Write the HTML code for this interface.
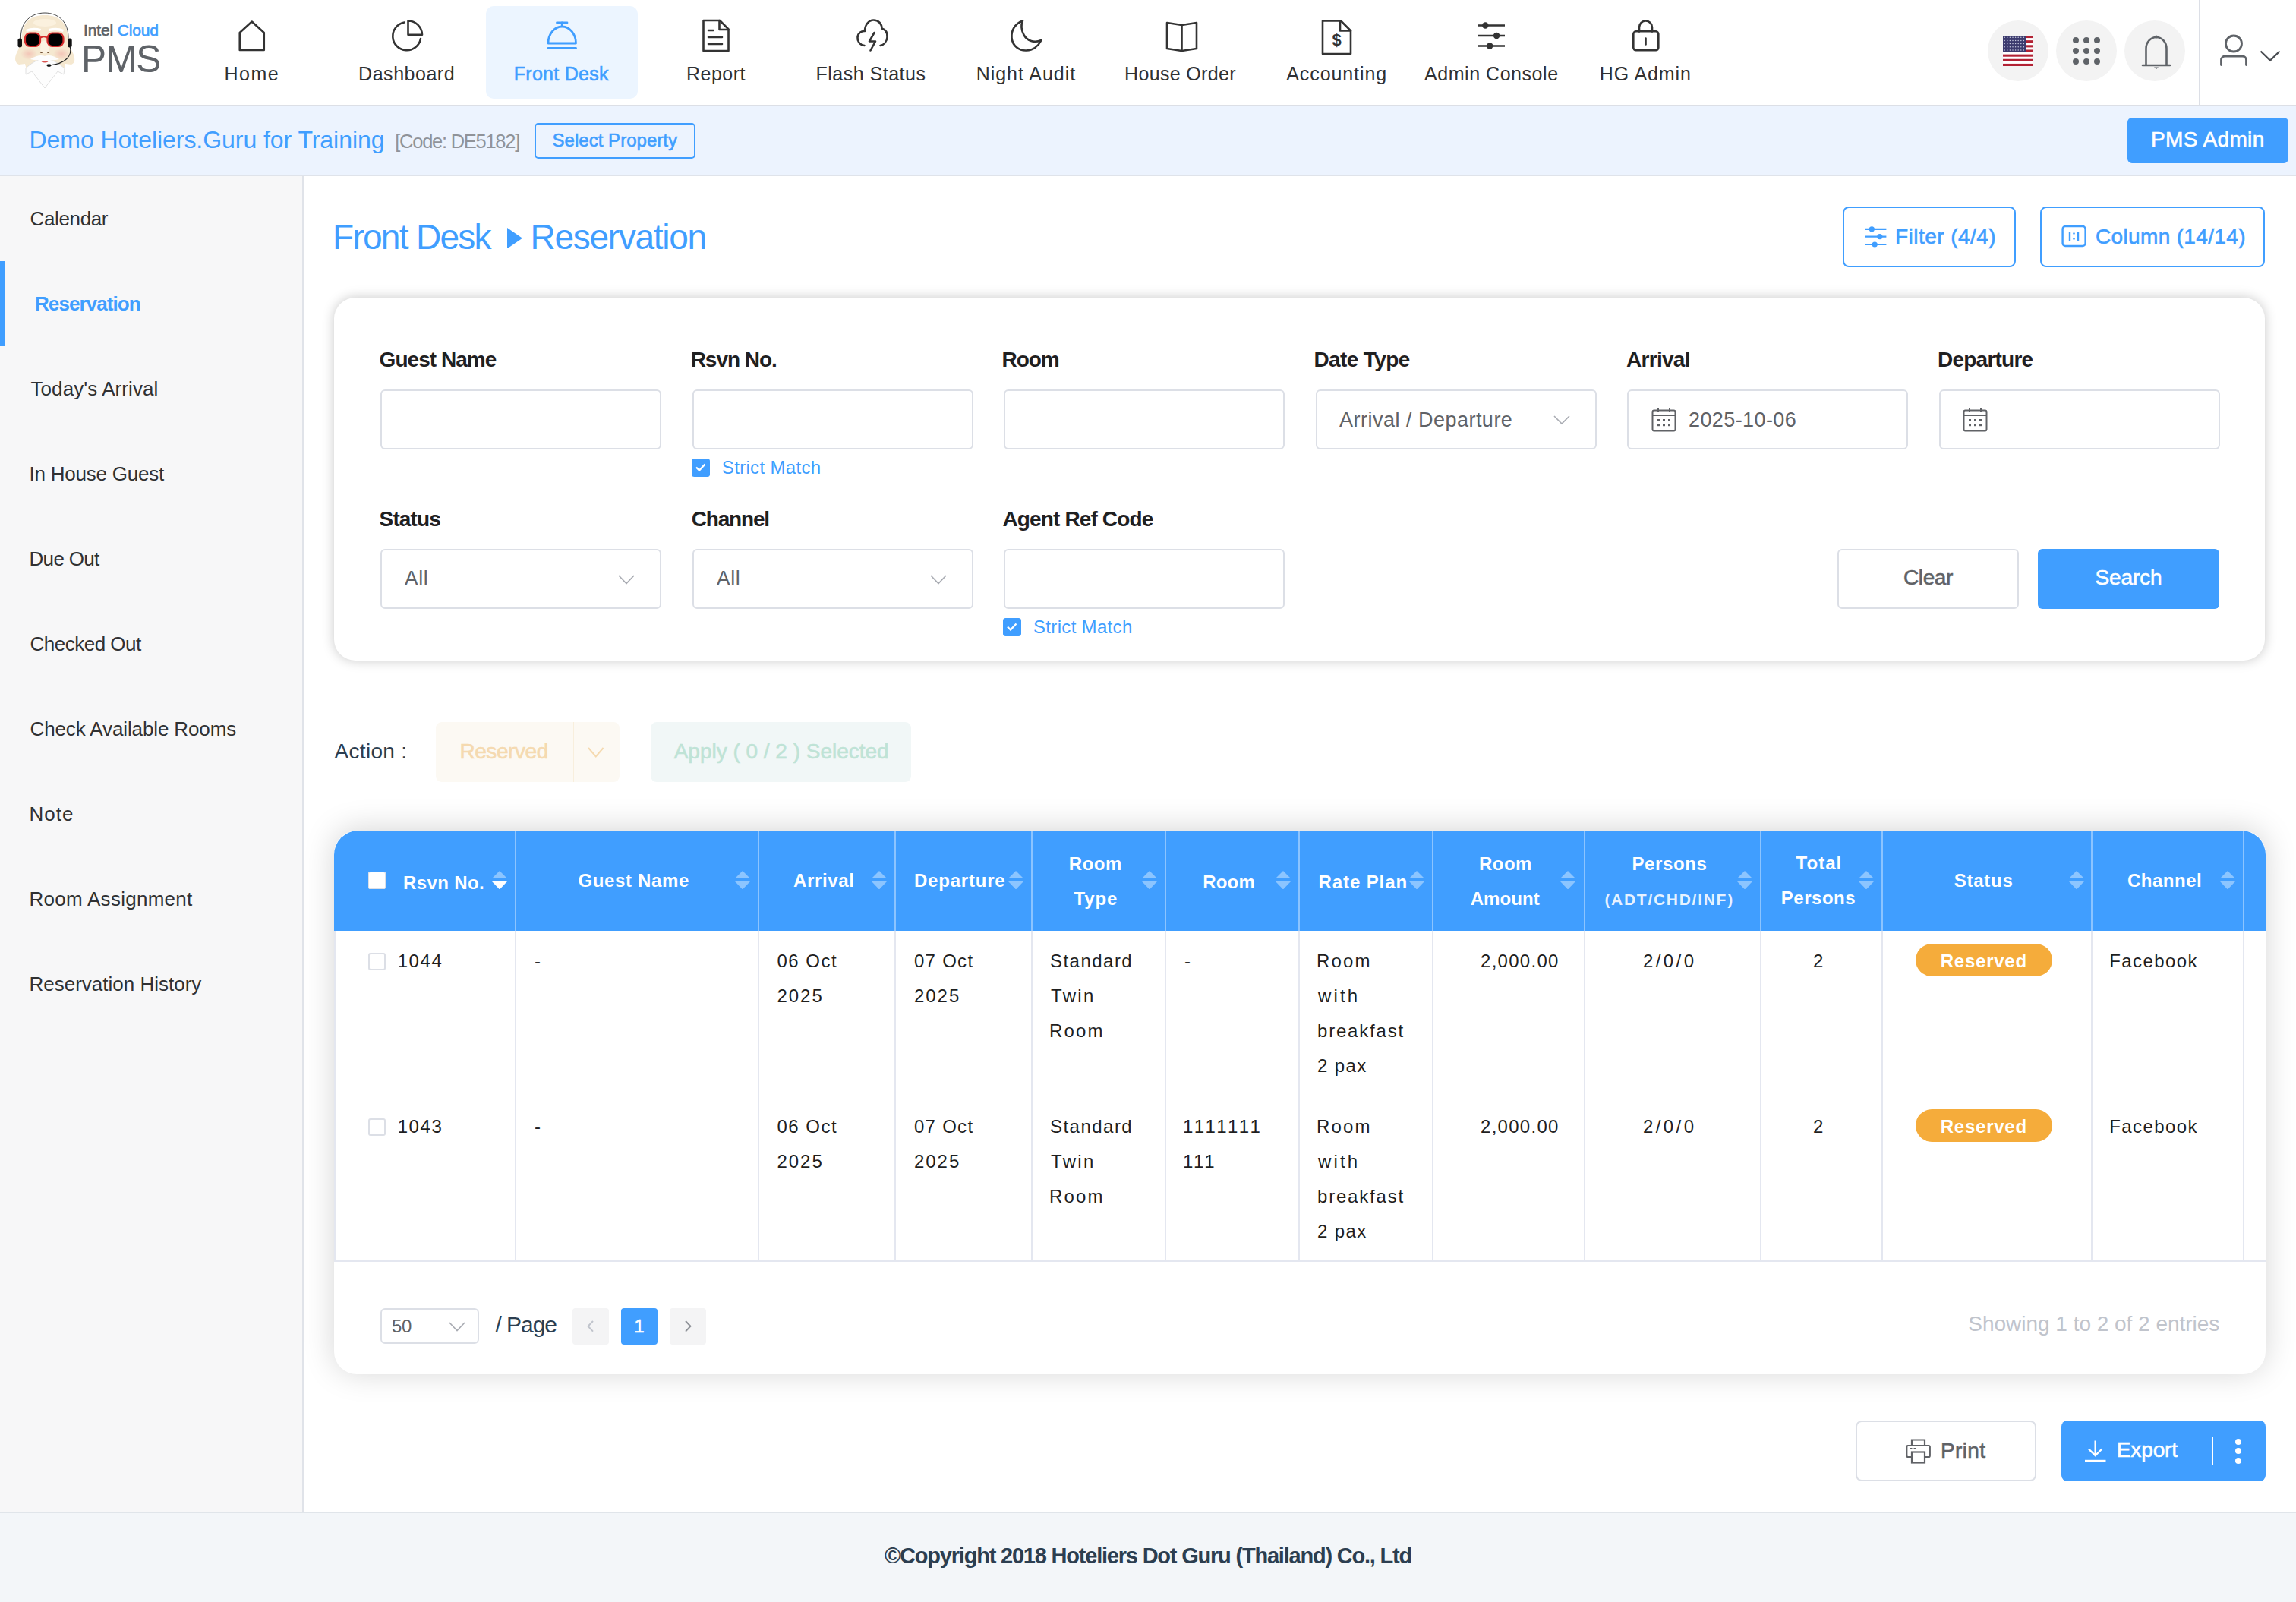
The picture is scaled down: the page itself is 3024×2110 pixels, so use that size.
<!DOCTYPE html>
<html><head><meta charset="utf-8"><title>Reservation</title><style>
*{margin:0;padding:0;box-sizing:border-box;}
html,body{width:3024px;height:2110px;overflow:hidden;background:#fff;}
body{position:relative;font-family:"Liberation Sans",sans-serif;color:#303133;}
.t{position:absolute;white-space:nowrap;}
.r{position:absolute;}
</style></head><body>
<div class="r" style="left:0px;top:0px;width:3024px;height:138px;background:#fff;"></div>
<div class="r" style="left:0px;top:138px;width:3024px;height:2px;background:#dcdfe6;"></div>
<svg class="r" style="left:0px;top:0px;" width="110" height="125" viewBox="0 0 110 125">
<defs><radialGradient id="ck"><stop offset="0" stop-color="#f3c6b8"/><stop offset="1" stop-color="#f3c6b8" stop-opacity="0"/></radialGradient></defs>
<path d="M59 20 C40 20 30 30 29 46 C28 56 25 64 21 72 C19 78 20 83 25 85 L33 84 L35 92 L43 91 L59 116 L75 91 L85 92 L86 84 L94 85 C99 83 99 78 97 72 C93 64 90 56 89 46 C88 30 78 20 59 20Z" fill="#f5e8d0"/>
<ellipse cx="59" cy="30" rx="15" ry="5" fill="#fbf1de"/>
<ellipse cx="38" cy="71" rx="11" ry="8" fill="url(#ck)"/>
<ellipse cx="81" cy="71" rx="11" ry="8" fill="url(#ck)"/>
<path d="M34 90 C40 84 46 80 59 76 C72 80 78 84 85 90 L84 98 L76 94 L59 116 L42 94 L34 98Z" fill="#fdfdfd" stroke="#dcdcdc" stroke-width="0.9"/>
<path d="M40 78 C48 73 54 72 59 74 C64 72 70 73 78 78 C72 80 64 79 59 79 C54 79 46 80 40 78Z" fill="#fdfdfd"/>
<path d="M54.5 81.5 Q59 78.5 63.5 81.5 Q59 83.5 54.5 81.5Z" fill="#d9534f"/>
<path d="M54 55 Q59 52 64 55 L65 66 Q62 71 59 70 Q56 71 53 66Z" fill="#fbf2e2"/><ellipse cx="54.5" cy="69" rx="1.6" ry="0.9" fill="#6b4a2e"/><ellipse cx="63.5" cy="69" rx="1.6" ry="0.9" fill="#6b4a2e"/>
<path d="M34 39 Q43 35 54 38 L53 41 Q43 39 35 42Z M64 38 Q75 35 84 39 L83 42 Q75 39 65 41Z" fill="#fff"/>
<rect x="33" y="43.5" width="20" height="17.5" rx="6.5" fill="#000" stroke="#d42a2a" stroke-width="2.2"/>
<rect x="62.5" y="43.5" width="21" height="17.5" rx="6.5" fill="#000" stroke="#d42a2a" stroke-width="2.2"/>
<path d="M52.5 50 Q58 46.5 63 50" stroke="#d42a2a" stroke-width="2" fill="none"/>
<path d="M27.5 52 C26 28 42 17 59 17 C76 17 91 28 90 52" stroke="#333" stroke-width="0.9" fill="none"/>
<rect x="23.5" y="50.5" width="5.5" height="12" rx="2.7" fill="#111"/>
<rect x="89.2" y="50.5" width="5.5" height="12" rx="2.7" fill="#111"/>
<path d="M92 60 C96 74 86 84 65 86" stroke="#222" stroke-width="1.1" fill="none"/>
<ellipse cx="64.5" cy="86" rx="3" ry="1.8" fill="#111"/>
</svg>
<div class="t" style="top:29.22px;font-size:21px;line-height:21px;color:#5a5e66;-webkit-text-stroke-width:0.6px;letter-spacing:-0.150px;left:110px;">Intel <span style="color:#409eff">Cloud</span></div>
<div class="t" style="top:53.40px;font-size:49.5px;line-height:49.5px;color:#5f6368;letter-spacing:-1.000px;left:107px;">PMS</div>
<div class="r" style="left:640px;top:8px;width:200px;height:122px;background:#ecf5ff;border-radius:10px;"></div>
<svg class="r" style="left:309.25px;top:24px;" width="46" height="50" viewBox="0 0 46 50"><path d="M6.75 19 L22.75 4.5 L38.75 19 V42 H6.75 Z" stroke="#333" stroke-width="2.6" fill="none" stroke-linecap="round" stroke-linejoin="round" stroke-linecap="butt" stroke-linejoin="miter"/></svg>
<div class="t" style="top:84.84px;font-size:25px;line-height:25px;color:#303133;letter-spacing:1.467px;left:295.5px;">Home</div>
<svg class="r" style="left:513.0px;top:24px;" width="46" height="50" viewBox="0 0 46 50"><path d="M19.5 5.5 A18.5 18.5 0 1 0 41 27" stroke="#333" stroke-width="2.6" fill="none" stroke-linecap="round" stroke-linejoin="round"/><path d="M24.5 3.5 V21.8 H43 A18.5 18.5 0 0 0 24.5 3.5 Z" stroke="#333" stroke-width="2.6" fill="none" stroke-linecap="round" stroke-linejoin="round" stroke-linejoin="miter"/></svg>
<div class="t" style="top:84.84px;font-size:25px;line-height:25px;color:#303133;letter-spacing:0.525px;left:472.1px;">Dashboard</div>
<svg class="r" style="left:717.75px;top:24px;" width="46" height="50" viewBox="0 0 46 50"><g stroke="#409eff" stroke-width="2.8" fill="none" stroke-linecap="round"><path d="M15.5 6 H29"/><path d="M22.25 6 V10"/><path d="M4 33 A18.25 22 0 0 1 40.5 33 Z" stroke-linejoin="round"/><path d="M4 39.5 H40.5"/></g></svg>
<div class="t" style="top:84.84px;font-size:25px;line-height:25px;color:#409eff;-webkit-text-stroke-width:0.6px;letter-spacing:0.267px;left:676.8px;">Front Desk</div>
<svg class="r" style="left:922px;top:24px;" width="46" height="50" viewBox="0 0 46 50"><path d="M4.5 3 H26 L37.5 14.5 V43 H4.5 Z" stroke="#333" stroke-width="2.6" fill="none" stroke-linecap="round" stroke-linejoin="round" stroke-linejoin="miter" stroke-linecap="butt"/><path d="M25.5 3 V15 H37.5" stroke="#333" stroke-width="2.6" fill="none" stroke-linecap="round" stroke-linejoin="round" stroke-linejoin="miter"/><path d="M11 16 H17.5 M11 25 H29 M11 34 H29" stroke="#333" stroke-width="2.6" fill="none" stroke-linecap="round" stroke-linejoin="round" stroke-linecap="butt"/></svg>
<div class="t" style="top:84.84px;font-size:25px;line-height:25px;color:#303133;letter-spacing:0.520px;left:903.9px;">Report</div>
<svg class="r" style="left:1125.5px;top:23px;" width="46" height="50" viewBox="0 0 46 50"><path d="M12.5 37 C6 36 3 31 3.5 26 C4 20.5 8.5 17.5 13 18 C13 10 18 3.5 24.5 3.5 C31 3.5 35.5 8.5 35.5 14.5 C40.5 16 43 20 42.5 26 C42 32 38 36 33.5 37" stroke="#333" stroke-width="2.6" fill="none" stroke-linecap="round" stroke-linejoin="round"/><path d="M25.5 20 L19 31.5 H27 L20.5 43.5" stroke="#333" stroke-width="2.6" fill="none" stroke-linecap="round" stroke-linejoin="round"/></svg>
<div class="t" style="top:84.84px;font-size:25px;line-height:25px;color:#303133;letter-spacing:0.509px;left:1074.4px;">Flash Status</div>
<svg class="r" style="left:1329px;top:24px;" width="46" height="50" viewBox="0 0 46 50"><path d="M18 3.5 C8 7 2.5 16 3.5 26 C4.5 36 13 43 23 42.5 C31 42 38.5 37 42.5 29 C33 33 24 30 19.5 22 C16 15.5 15.5 9 18 3.5 Z" stroke="#333" stroke-width="2.6" fill="none" stroke-linecap="round" stroke-linejoin="round"/></svg>
<div class="t" style="top:84.84px;font-size:25px;line-height:25px;color:#303133;letter-spacing:0.950px;left:1285.7px;">Night Audit</div>
<svg class="r" style="left:1533.5px;top:26px;" width="46" height="50" viewBox="0 0 46 50"><path d="M3 4 L22.5 7 L42 4 V38 L22.5 41 L3 38 Z" stroke="#333" stroke-width="2.6" fill="none" stroke-linecap="round" stroke-linejoin="round"/><path d="M22.5 7 V41" stroke="#333" stroke-width="2.6" fill="none" stroke-linecap="round" stroke-linejoin="round"/></svg>
<div class="t" style="top:84.84px;font-size:25px;line-height:25px;color:#303133;letter-spacing:0.340px;left:1481px;">House Order</div>
<svg class="r" style="left:1737.5px;top:24px;" width="46" height="50" viewBox="0 0 46 50"><path d="M4 3.5 H28 L41 16.5 V47 H4 Z" stroke="#333" stroke-width="2.6" fill="none" stroke-linecap="round" stroke-linejoin="round" stroke-linejoin="miter" stroke-linecap="butt"/><path d="M27 3.5 V16.5 H41" stroke="#333" stroke-width="2.6" fill="none" stroke-linecap="round" stroke-linejoin="round" stroke-linejoin="miter"/><text x="22.5" y="36" font-family="Liberation Sans" font-weight="700" font-size="22" fill="#333" text-anchor="middle">$</text></svg>
<div class="t" style="top:84.84px;font-size:25px;line-height:25px;color:#303133;letter-spacing:0.922px;left:1694.2px;">Accounting</div>
<svg class="r" style="left:1941px;top:24px;" width="46" height="50" viewBox="0 0 46 50"><path d="M5 9.5 H41 M5 23 H41 M5 36.5 H41" stroke="#333" stroke-width="2.6"/><circle cx="15.3" cy="9.5" r="4.2" fill="#333"/><circle cx="30.1" cy="23" r="4.2" fill="#333"/><circle cx="21.2" cy="36.5" r="4.2" fill="#333"/></svg>
<div class="t" style="top:84.84px;font-size:25px;line-height:25px;color:#303133;letter-spacing:0.542px;left:1876px;">Admin Console</div>
<svg class="r" style="left:2147.2px;top:24px;" width="46" height="50" viewBox="0 0 46 50"><path d="M12 17.5 V12 A8.5 8.5 0 0 1 29 12 V17.5" stroke="#333" stroke-width="2.6" fill="none" stroke-linecap="round" stroke-linejoin="round"/><rect x="4.3" y="17.3" width="33" height="25" rx="3.5" stroke="#333" stroke-width="2.6" fill="none" stroke-linecap="round" stroke-linejoin="round"/><path d="M20.5 26.5 V34.5" stroke="#333" stroke-width="2.6" fill="none" stroke-linecap="round" stroke-linejoin="round"/></svg>
<div class="t" style="top:84.84px;font-size:25px;line-height:25px;color:#303133;letter-spacing:0.900px;left:2106.7px;">HG Admin</div>
<div class="r" style="left:2618px;top:27px;width:80px;height:80px;background:#f3f3f3;border-radius:50%;"></div>
<div class="r" style="left:2708px;top:27px;width:80px;height:80px;background:#f3f3f3;border-radius:50%;"></div>
<div class="r" style="left:2798px;top:27px;width:80px;height:80px;background:#f3f3f3;border-radius:50%;"></div>
<svg class="r" style="left:2638px;top:47px;" width="40" height="40" viewBox="0 0 40 40"><rect width="40" height="40" fill="#fff"/><rect y="0.00" width="40" height="3.08" fill="#b22234"/><rect y="6.15" width="40" height="3.08" fill="#b22234"/><rect y="12.31" width="40" height="3.08" fill="#b22234"/><rect y="18.46" width="40" height="3.08" fill="#b22234"/><rect y="24.62" width="40" height="3.08" fill="#b22234"/><rect y="30.77" width="40" height="3.08" fill="#b22234"/><rect y="36.92" width="40" height="3.08" fill="#b22234"/><rect width="30" height="21.5" fill="#3c3b6e"/><circle cx="2.2" cy="2.2" r="0.75" fill="#c8cbe0"/><circle cx="5.8" cy="2.2" r="0.75" fill="#c8cbe0"/><circle cx="9.4" cy="2.2" r="0.75" fill="#c8cbe0"/><circle cx="13.0" cy="2.2" r="0.75" fill="#c8cbe0"/><circle cx="16.6" cy="2.2" r="0.75" fill="#c8cbe0"/><circle cx="20.2" cy="2.2" r="0.75" fill="#c8cbe0"/><circle cx="23.8" cy="2.2" r="0.75" fill="#c8cbe0"/><circle cx="27.4" cy="2.2" r="0.75" fill="#c8cbe0"/><circle cx="2.2" cy="6.4" r="0.75" fill="#c8cbe0"/><circle cx="5.8" cy="6.4" r="0.75" fill="#c8cbe0"/><circle cx="9.4" cy="6.4" r="0.75" fill="#c8cbe0"/><circle cx="13.0" cy="6.4" r="0.75" fill="#c8cbe0"/><circle cx="16.6" cy="6.4" r="0.75" fill="#c8cbe0"/><circle cx="20.2" cy="6.4" r="0.75" fill="#c8cbe0"/><circle cx="23.8" cy="6.4" r="0.75" fill="#c8cbe0"/><circle cx="27.4" cy="6.4" r="0.75" fill="#c8cbe0"/><circle cx="2.2" cy="10.6" r="0.75" fill="#c8cbe0"/><circle cx="5.8" cy="10.6" r="0.75" fill="#c8cbe0"/><circle cx="9.4" cy="10.6" r="0.75" fill="#c8cbe0"/><circle cx="13.0" cy="10.6" r="0.75" fill="#c8cbe0"/><circle cx="16.6" cy="10.6" r="0.75" fill="#c8cbe0"/><circle cx="20.2" cy="10.6" r="0.75" fill="#c8cbe0"/><circle cx="23.8" cy="10.6" r="0.75" fill="#c8cbe0"/><circle cx="27.4" cy="10.6" r="0.75" fill="#c8cbe0"/><circle cx="2.2" cy="14.8" r="0.75" fill="#c8cbe0"/><circle cx="5.8" cy="14.8" r="0.75" fill="#c8cbe0"/><circle cx="9.4" cy="14.8" r="0.75" fill="#c8cbe0"/><circle cx="13.0" cy="14.8" r="0.75" fill="#c8cbe0"/><circle cx="16.6" cy="14.8" r="0.75" fill="#c8cbe0"/><circle cx="20.2" cy="14.8" r="0.75" fill="#c8cbe0"/><circle cx="23.8" cy="14.8" r="0.75" fill="#c8cbe0"/><circle cx="27.4" cy="14.8" r="0.75" fill="#c8cbe0"/><circle cx="2.2" cy="19.0" r="0.75" fill="#c8cbe0"/><circle cx="5.8" cy="19.0" r="0.75" fill="#c8cbe0"/><circle cx="9.4" cy="19.0" r="0.75" fill="#c8cbe0"/><circle cx="13.0" cy="19.0" r="0.75" fill="#c8cbe0"/><circle cx="16.6" cy="19.0" r="0.75" fill="#c8cbe0"/><circle cx="20.2" cy="19.0" r="0.75" fill="#c8cbe0"/><circle cx="23.8" cy="19.0" r="0.75" fill="#c8cbe0"/><circle cx="27.4" cy="19.0" r="0.75" fill="#c8cbe0"/></svg>
<div class="r" style="left:2729.5px;top:48.6px;width:8.2px;height:8.2px;background:#5f6368;border-radius:50%;"></div>
<div class="r" style="left:2743.7000000000003px;top:48.6px;width:8.2px;height:8.2px;background:#5f6368;border-radius:50%;"></div>
<div class="r" style="left:2757.9px;top:48.6px;width:8.2px;height:8.2px;background:#5f6368;border-radius:50%;"></div>
<div class="r" style="left:2729.5px;top:62.800000000000004px;width:8.2px;height:8.2px;background:#5f6368;border-radius:50%;"></div>
<div class="r" style="left:2743.7000000000003px;top:62.800000000000004px;width:8.2px;height:8.2px;background:#5f6368;border-radius:50%;"></div>
<div class="r" style="left:2757.9px;top:62.800000000000004px;width:8.2px;height:8.2px;background:#5f6368;border-radius:50%;"></div>
<div class="r" style="left:2729.5px;top:76.9px;width:8.2px;height:8.2px;background:#5f6368;border-radius:50%;"></div>
<div class="r" style="left:2743.7000000000003px;top:76.9px;width:8.2px;height:8.2px;background:#5f6368;border-radius:50%;"></div>
<div class="r" style="left:2757.9px;top:76.9px;width:8.2px;height:8.2px;background:#5f6368;border-radius:50%;"></div>
<svg class="r" style="left:2812px;top:40px;" width="52" height="52" viewBox="0 0 52 52"><path d="M10 46 H46" stroke="#5f6368" stroke-width="2.6" stroke-linecap="round"/><path d="M14.5 46 V24 A13.5 15 0 0 1 41.5 24 V46" stroke="#5f6368" stroke-width="2.6" fill="none"/><circle cx="28" cy="8.5" r="2" fill="#5f6368"/><path d="M25 48.5 H31 L28 51Z" fill="#5f6368"/></svg>
<div class="r" style="left:2896px;top:0px;width:2px;height:138px;background:#dcdfe6;"></div>
<svg class="r" style="left:2920px;top:42px;" width="90" height="50" viewBox="0 0 90 50"><circle cx="22" cy="15.5" r="10.5" stroke="#5f6368" stroke-width="2.8" fill="none"/><path d="M5.5 43.5 V37 A5 5 0 0 1 10.5 32 H33.5 A5 5 0 0 1 38.5 37 V43.5" stroke="#5f6368" stroke-width="2.8" fill="none" stroke-linecap="round"/><path d="M57.5 25.5 L70 37.5 L82.5 25.5" stroke="#4a4d52" stroke-width="2.4" fill="none"/></svg>
<div class="r" style="left:0px;top:140px;width:3024px;height:90px;background:#ecf3fe;"></div>
<div class="r" style="left:0px;top:230px;width:3024px;height:2px;background:#dfe3ea;"></div>
<div class="t" style="top:167.91px;font-size:32px;line-height:32px;color:#409eff;letter-spacing:-0.048px;left:38.5px;">Demo Hoteliers.Guru for Training</div>
<div class="t" style="top:174.41px;font-size:25.5px;line-height:25.5px;color:#909399;letter-spacing:-1.269px;left:520.3px;">[Code: DE5182]</div>
<div class="r" style="left:704px;top:161.5px;width:212px;height:47px;border:2px solid #409eff;border-radius:5px;"></div>
<div class="t" style="top:172.68px;font-size:24px;line-height:24px;color:#409eff;-webkit-text-stroke-width:0.6px;letter-spacing:0.021px;left:727.6px;">Select Property</div>
<div class="r" style="left:2802px;top:155px;width:212px;height:60px;background:#409eff;border-radius:6px;"></div>
<div class="t" style="top:170.30px;font-size:28px;line-height:28px;color:#fff;-webkit-text-stroke-width:0.6px;letter-spacing:0.375px;left:2833px;">PMS Admin</div>
<div class="r" style="left:0px;top:232px;width:398px;height:1759px;background:#f7f7f8;"></div>
<div class="r" style="left:398px;top:232px;width:2px;height:1759px;background:#e0e3e9;"></div>
<div class="t" style="top:274.99px;font-size:26px;line-height:26px;color:#303133;letter-spacing:-0.357px;left:39.5px;">Calendar</div>
<div class="r" style="left:0px;top:344px;width:6px;height:112px;background:#409eff;"></div>
<div class="t" style="top:386.99px;font-size:26px;line-height:26px;color:#409eff;font-weight:700;letter-spacing:-0.930px;left:46px;">Reservation</div>
<div class="t" style="top:498.99px;font-size:26px;line-height:26px;color:#303133;letter-spacing:0.071px;left:40.5px;">Today's Arrival</div>
<div class="t" style="top:610.99px;font-size:26px;line-height:26px;color:#303133;letter-spacing:-0.231px;left:38.5px;">In House Guest</div>
<div class="t" style="top:722.99px;font-size:26px;line-height:26px;color:#303133;letter-spacing:-0.667px;left:38.5px;">Due Out</div>
<div class="t" style="top:834.99px;font-size:26px;line-height:26px;color:#303133;letter-spacing:-0.500px;left:39.5px;">Checked Out</div>
<div class="t" style="top:946.99px;font-size:26px;line-height:26px;color:#303133;letter-spacing:-0.120px;left:39.5px;">Check Available Rooms</div>
<div class="t" style="top:1058.99px;font-size:26px;line-height:26px;color:#303133;letter-spacing:1.000px;left:38.5px;">Note</div>
<div class="t" style="top:1170.99px;font-size:26px;line-height:26px;color:#303133;letter-spacing:0.271px;left:38.5px;">Room Assignment</div>
<div class="t" style="top:1282.99px;font-size:26px;line-height:26px;color:#303133;left:38.5px;">Reservation History</div>
<div class="r" style="left:0px;top:1991px;width:3024px;height:119px;background:#f3f6f9;"></div>
<div class="r" style="left:0px;top:1991px;width:3024px;height:2px;background:#e0e5ea;"></div>
<div class="t" style="top:2035.45px;font-size:29px;line-height:29px;color:#2c3e50;font-weight:700;letter-spacing:-1.208px;left:912.0px;width:1200px;text-align:center;">&copy;Copyright 2018 Hoteliers Dot Guru (Thailand) Co., Ltd</div>
<div class="t" style="top:289.06px;font-size:46px;line-height:46px;color:#409eff;letter-spacing:-1.711px;left:438px;">Front Desk</div>
<svg class="r" style="left:668px;top:299.5px;" width="20" height="27.5" viewBox="0 0 20 27.5"><path d="M0 0 L20 13.75 L0 27.5Z" fill="#409eff"/></svg>
<div class="t" style="top:289.06px;font-size:46px;line-height:46px;color:#409eff;letter-spacing:-1.280px;left:698.5px;">Reservation</div>
<div class="r" style="left:2427px;top:272px;width:228px;height:79.5px;border:2px solid #409eff;border-radius:8px;"></div>
<svg class="r" style="left:2455px;top:296px;" width="32" height="30" viewBox="0 0 32 30"><path d="M2 5.8 H29.4 M2 15.7 H29.4 M2 26 H29.4" stroke="#409eff" stroke-width="2.2"/><circle cx="10.3" cy="5.8" r="3.6" fill="#409eff"/><circle cx="20.8" cy="15.7" r="3.6" fill="#409eff"/><circle cx="14.2" cy="26" r="3.6" fill="#409eff"/></svg>
<div class="t" style="top:297.70px;font-size:28px;line-height:28px;color:#409eff;-webkit-text-stroke-width:0.6px;letter-spacing:0.455px;left:2496px;">Filter (4/4)</div>
<div class="r" style="left:2687px;top:272px;width:296px;height:79.5px;border:2px solid #409eff;border-radius:8px;"></div>
<svg class="r" style="left:2714px;top:296px;" width="35" height="30" viewBox="0 0 35 30"><rect x="2.6" y="2" width="30" height="26" rx="3.5" stroke="#409eff" stroke-width="2.4" fill="none"/><path d="M12 9 V21 M23 9 V21" stroke="#409eff" stroke-width="2.4"/><circle cx="17.5" cy="11.5" r="1.3" fill="#409eff"/><circle cx="17.5" cy="18.5" r="1.3" fill="#409eff"/></svg>
<div class="t" style="top:297.70px;font-size:28px;line-height:28px;color:#409eff;-webkit-text-stroke-width:0.6px;letter-spacing:0.346px;left:2760px;">Column (14/14)</div>
<div class="r" style="left:440px;top:392px;width:2543px;height:478px;background:#fff;border-radius:28px;box-shadow:0 0 16px rgba(0,0,0,0.22);"></div>
<div class="t" style="top:459.80px;font-size:28px;line-height:28px;color:#1f2021;font-weight:700;letter-spacing:-0.956px;left:499.6px;">Guest Name</div>
<div class="r" style="left:500.6px;top:512.5px;width:370px;height:79.5px;border:2px solid #dcdfe6;border-radius:6px;background:#fff;"></div>
<div class="t" style="top:459.80px;font-size:28px;line-height:28px;color:#1f2021;font-weight:700;letter-spacing:-1.043px;left:909.7px;">Rsvn No.</div>
<div class="r" style="left:911.7px;top:512.5px;width:370px;height:79.5px;border:2px solid #dcdfe6;border-radius:6px;background:#fff;"></div>
<div class="t" style="top:459.80px;font-size:28px;line-height:28px;color:#1f2021;font-weight:700;letter-spacing:-1.067px;left:1319.5px;">Room</div>
<div class="r" style="left:1321.5px;top:512.5px;width:370px;height:79.5px;border:2px solid #dcdfe6;border-radius:6px;background:#fff;"></div>
<div class="t" style="top:459.80px;font-size:28px;line-height:28px;color:#1f2021;font-weight:700;letter-spacing:-0.625px;left:1730.5px;">Date Type</div>
<div class="r" style="left:1732.5px;top:512.5px;width:370px;height:79.5px;border:2px solid #dcdfe6;border-radius:6px;background:#fff;"></div>
<div class="t" style="top:459.80px;font-size:28px;line-height:28px;color:#1f2021;font-weight:700;letter-spacing:-0.700px;left:2142px;">Arrival</div>
<div class="r" style="left:2143px;top:512.5px;width:370px;height:79.5px;border:2px solid #dcdfe6;border-radius:6px;background:#fff;"></div>
<div class="t" style="top:459.80px;font-size:28px;line-height:28px;color:#1f2021;font-weight:700;letter-spacing:-0.762px;left:2552px;">Departure</div>
<div class="r" style="left:2554px;top:512.5px;width:370px;height:79.5px;border:2px solid #dcdfe6;border-radius:6px;background:#fff;"></div>
<div class="t" style="top:670.30px;font-size:28px;line-height:28px;color:#1f2021;font-weight:700;letter-spacing:-0.860px;left:499.6px;">Status</div>
<div class="r" style="left:500.6px;top:722.5px;width:370px;height:79.5px;border:2px solid #dcdfe6;border-radius:6px;background:#fff;"></div>
<div class="t" style="top:670.30px;font-size:28px;line-height:28px;color:#1f2021;font-weight:700;letter-spacing:-1.167px;left:910.7px;">Channel</div>
<div class="r" style="left:911.7px;top:722.5px;width:370px;height:79.5px;border:2px solid #dcdfe6;border-radius:6px;background:#fff;"></div>
<div class="t" style="top:670.30px;font-size:28px;line-height:28px;color:#1f2021;font-weight:700;letter-spacing:-0.869px;left:1320.5px;">Agent Ref Code</div>
<div class="r" style="left:1321.5px;top:722.5px;width:370px;height:79.5px;border:2px solid #dcdfe6;border-radius:6px;background:#fff;"></div>
<div class="r" style="left:911.2px;top:604.3px;width:23.6px;height:23.6px;background:#409eff;border-radius:3.5px;"></div>
<svg class="r" style="left:911.2px;top:604.3px;" width="23.6" height="23.6" viewBox="0 0 23.6 23.6"><path d="M6 11.5 L10 15.5 L17.5 7.5" stroke="#fff" stroke-width="2.4" fill="none"/></svg>
<div class="t" style="top:603.68px;font-size:24px;line-height:24px;color:#409eff;letter-spacing:0.327px;left:950.8px;">Strict Match</div>
<div class="r" style="left:1321px;top:814.2px;width:23.6px;height:23.6px;background:#409eff;border-radius:3.5px;"></div>
<svg class="r" style="left:1321px;top:814.2px;" width="23.6" height="23.6" viewBox="0 0 23.6 23.6"><path d="M6 11.5 L10 15.5 L17.5 7.5" stroke="#fff" stroke-width="2.4" fill="none"/></svg>
<div class="t" style="top:813.68px;font-size:24px;line-height:24px;color:#409eff;letter-spacing:0.327px;left:1361px;">Strict Match</div>
<div class="t" style="top:749.14px;font-size:27px;line-height:27px;color:#606266;letter-spacing:0.500px;left:532.8px;">All</div>
<svg class="r" style="left:813px;top:755.5px;" width="24" height="14.5" viewBox="0 0 24 14.5"><path d="M2 2 L12.0 12.5 L22 2" stroke="#a8abb2" stroke-width="1.6" fill="none"/></svg>
<div class="t" style="top:749.14px;font-size:27px;line-height:27px;color:#606266;letter-spacing:0.500px;left:943.8px;">All</div>
<svg class="r" style="left:1224px;top:755.5px;" width="24" height="14.5" viewBox="0 0 24 14.5"><path d="M2 2 L12.0 12.5 L22 2" stroke="#a8abb2" stroke-width="1.6" fill="none"/></svg>
<div class="t" style="top:539.74px;font-size:27px;line-height:27px;color:#606266;letter-spacing:0.489px;left:1764px;">Arrival / Departure</div>
<svg class="r" style="left:2045px;top:545.5px;" width="24" height="14" viewBox="0 0 24 14"><path d="M2 2 L12.0 12 L22 2" stroke="#a8abb2" stroke-width="1.6" fill="none"/></svg>
<svg class="r" style="left:2174.5px;top:535.5px;" width="33" height="33" viewBox="0 0 33 33"><rect x="1.5" y="4.5" width="30" height="27" rx="2" stroke="#606266" stroke-width="2" fill="none"/><path d="M1.5 11 H31.5" stroke="#606266" stroke-width="2"/><path d="M9 1 V7 M24 1 V7" stroke="#606266" stroke-width="2"/><g fill="#606266"><rect x="8" y="16" width="3" height="2.2"/><rect x="15" y="16" width="3" height="2.2"/><rect x="22" y="16" width="3" height="2.2"/><rect x="8" y="23" width="3" height="2.2"/><rect x="15" y="23" width="3" height="2.2"/><rect x="22" y="23" width="3" height="2.2"/></g></svg>
<div class="t" style="top:539.74px;font-size:27px;line-height:27px;color:#606266;letter-spacing:0.411px;left:2224px;">2025-10-06</div>
<svg class="r" style="left:2584.5px;top:535.5px;" width="33" height="33" viewBox="0 0 33 33"><rect x="1.5" y="4.5" width="30" height="27" rx="2" stroke="#606266" stroke-width="2" fill="none"/><path d="M1.5 11 H31.5" stroke="#606266" stroke-width="2"/><path d="M9 1 V7 M24 1 V7" stroke="#606266" stroke-width="2"/><g fill="#606266"><rect x="8" y="16" width="3" height="2.2"/><rect x="15" y="16" width="3" height="2.2"/><rect x="22" y="16" width="3" height="2.2"/><rect x="8" y="23" width="3" height="2.2"/><rect x="15" y="23" width="3" height="2.2"/><rect x="22" y="23" width="3" height="2.2"/></g></svg>
<div class="r" style="left:2420px;top:722.5px;width:239px;height:79px;border:2px solid #dcdfe6;border-radius:6px;background:#fff;"></div>
<div class="t" style="top:746.90px;font-size:28px;line-height:28px;color:#606266;-webkit-text-stroke-width:0.6px;letter-spacing:-0.350px;left:2420.0px;width:239px;text-align:center;">Clear</div>
<div class="r" style="left:2684px;top:722.5px;width:239px;height:79px;background:#409eff;border-radius:6px;"></div>
<div class="t" style="top:746.90px;font-size:28px;line-height:28px;color:#fff;-webkit-text-stroke-width:0.6px;letter-spacing:-0.120px;left:2684.0px;width:239px;text-align:center;">Search</div>
<div class="t" style="top:976.30px;font-size:28px;line-height:28px;color:#2c3e50;letter-spacing:0.314px;left:440.5px;">Action :</div>
<div class="r" style="left:574.4px;top:950.6px;width:242px;height:79.4px;background:#fcf9f3;border-radius:8px;"></div>
<div class="r" style="left:754.5px;top:950.6px;width:1.5px;height:79.4px;background:#f8efdd;"></div>
<div class="t" style="top:975.80px;font-size:28px;line-height:28px;color:#f5dab0;-webkit-text-stroke-width:0.6px;letter-spacing:-0.414px;left:605.4px;">Reserved</div>
<svg class="r" style="left:773.4px;top:983px;" width="23.6" height="15.5" viewBox="0 0 23.6 15.5"><path d="M2 2 L11.8 13.5 L21.6 2" stroke="#f5dab0" stroke-width="2" fill="none"/></svg>
<div class="r" style="left:857px;top:950.6px;width:342.5px;height:79.4px;background:#f1f7f7;border-radius:8px;"></div>
<div class="t" style="top:975.80px;font-size:28px;line-height:28px;color:#bfe3d6;-webkit-text-stroke-width:0.6px;letter-spacing:-0.013px;left:887.7px;">Apply ( 0 / 2 ) Selected</div>
<div class="r" style="left:440px;top:1094px;width:2543.5px;height:716px;background:#fff;border-radius:30px;box-shadow:0 -2px 40px rgba(0,0,0,0.17);"></div>
<div class="r" style="left:440px;top:1094px;width:2543.5px;height:132px;background:#409eff;border-radius:32px 32px 0 0;"></div>
<div class="r" style="left:678.25px;top:1094px;width:1.5px;height:132px;background:#8cc4ff;"></div>
<div class="r" style="left:678.25px;top:1226px;width:1.5px;height:435.5px;background:#e4e7f0;"></div>
<div class="r" style="left:998.25px;top:1094px;width:1.5px;height:132px;background:#8cc4ff;"></div>
<div class="r" style="left:998.25px;top:1226px;width:1.5px;height:435.5px;background:#e4e7f0;"></div>
<div class="r" style="left:1178.25px;top:1094px;width:1.5px;height:132px;background:#8cc4ff;"></div>
<div class="r" style="left:1178.25px;top:1226px;width:1.5px;height:435.5px;background:#e4e7f0;"></div>
<div class="r" style="left:1358.25px;top:1094px;width:1.5px;height:132px;background:#8cc4ff;"></div>
<div class="r" style="left:1358.25px;top:1226px;width:1.5px;height:435.5px;background:#e4e7f0;"></div>
<div class="r" style="left:1534.25px;top:1094px;width:1.5px;height:132px;background:#8cc4ff;"></div>
<div class="r" style="left:1534.25px;top:1226px;width:1.5px;height:435.5px;background:#e4e7f0;"></div>
<div class="r" style="left:1710.25px;top:1094px;width:1.5px;height:132px;background:#8cc4ff;"></div>
<div class="r" style="left:1710.25px;top:1226px;width:1.5px;height:435.5px;background:#e4e7f0;"></div>
<div class="r" style="left:1886.25px;top:1094px;width:1.5px;height:132px;background:#8cc4ff;"></div>
<div class="r" style="left:1886.25px;top:1226px;width:1.5px;height:435.5px;background:#e4e7f0;"></div>
<div class="r" style="left:2085.75px;top:1094px;width:1.5px;height:132px;background:#8cc4ff;"></div>
<div class="r" style="left:2085.75px;top:1226px;width:1.5px;height:435.5px;background:#e4e7f0;"></div>
<div class="r" style="left:2318.25px;top:1094px;width:1.5px;height:132px;background:#8cc4ff;"></div>
<div class="r" style="left:2318.25px;top:1226px;width:1.5px;height:435.5px;background:#e4e7f0;"></div>
<div class="r" style="left:2478.25px;top:1094px;width:1.5px;height:132px;background:#8cc4ff;"></div>
<div class="r" style="left:2478.25px;top:1226px;width:1.5px;height:435.5px;background:#e4e7f0;"></div>
<div class="r" style="left:2754.25px;top:1094px;width:1.5px;height:132px;background:#8cc4ff;"></div>
<div class="r" style="left:2754.25px;top:1226px;width:1.5px;height:435.5px;background:#e4e7f0;"></div>
<div class="r" style="left:2954.25px;top:1094px;width:1.5px;height:132px;background:#8cc4ff;"></div>
<div class="r" style="left:2954.25px;top:1226px;width:1.5px;height:435.5px;background:#e4e7f0;"></div>
<div class="r" style="left:440px;top:1226px;width:1.5px;height:435.5px;background:#e4e7f0;"></div>
<div class="r" style="left:440px;top:1442.5px;width:2543.5px;height:1.5px;background:#e4e7f0;"></div>
<div class="r" style="left:440px;top:1660px;width:2543.5px;height:1.5px;background:#e4e7f0;"></div>
<div class="r" style="left:484.5px;top:1148px;width:23.5px;height:23px;background:#fff;border-radius:3px;box-shadow:0 0 0 1px #dcdfe6 inset;"></div>
<div class="t" style="top:1151.38px;font-size:24px;line-height:24px;color:#fff;font-weight:700;letter-spacing:0.371px;left:531px;">Rsvn No.</div>
<svg class="r" style="left:647.7px;top:1146.5px;" width="20" height="24.5" viewBox="0 0 20 24.5"><path d="M0 10 L10 0 L20 10Z" fill="rgba(255,255,255,0.4)"/><path d="M0 14 L10 24.5 L20 14Z" fill="#fff"/></svg>
<div class="t" style="top:1148.38px;font-size:24px;line-height:24px;color:#fff;font-weight:700;letter-spacing:0.667px;left:761.4px;">Guest Name</div>
<svg class="r" style="left:968px;top:1146.5px;" width="20" height="24.5" viewBox="0 0 20 24.5"><path d="M0 10 L10 0 L20 10Z" fill="rgba(255,255,255,0.4)"/><path d="M0 14 L10 24.5 L20 14Z" fill="rgba(255,255,255,0.4)"/></svg>
<div class="t" style="top:1148.38px;font-size:24px;line-height:24px;color:#fff;font-weight:700;letter-spacing:0.650px;left:1045px;">Arrival</div>
<svg class="r" style="left:1147.7px;top:1146.5px;" width="20" height="24.5" viewBox="0 0 20 24.5"><path d="M0 10 L10 0 L20 10Z" fill="rgba(255,255,255,0.4)"/><path d="M0 14 L10 24.5 L20 14Z" fill="rgba(255,255,255,0.4)"/></svg>
<div class="t" style="top:1148.38px;font-size:24px;line-height:24px;color:#fff;font-weight:700;letter-spacing:0.800px;left:1203.9px;">Departure</div>
<svg class="r" style="left:1327.5px;top:1146.5px;" width="20" height="24.5" viewBox="0 0 20 24.5"><path d="M0 10 L10 0 L20 10Z" fill="rgba(255,255,255,0.4)"/><path d="M0 14 L10 24.5 L20 14Z" fill="rgba(255,255,255,0.4)"/></svg>
<div class="t" style="top:1126.28px;font-size:24px;line-height:24px;color:#fff;font-weight:700;letter-spacing:0.500px;left:1407.8px;">Room</div>
<div class="t" style="top:1172.08px;font-size:24px;line-height:24px;color:#fff;font-weight:700;letter-spacing:0.833px;left:1414.5px;">Type</div>
<svg class="r" style="left:1504px;top:1146.5px;" width="20" height="24.5" viewBox="0 0 20 24.5"><path d="M0 10 L10 0 L20 10Z" fill="rgba(255,255,255,0.4)"/><path d="M0 14 L10 24.5 L20 14Z" fill="rgba(255,255,255,0.4)"/></svg>
<div class="t" style="top:1149.68px;font-size:24px;line-height:24px;color:#fff;font-weight:700;letter-spacing:0.200px;left:1584.2px;">Room</div>
<svg class="r" style="left:1680px;top:1146.5px;" width="20" height="24.5" viewBox="0 0 20 24.5"><path d="M0 10 L10 0 L20 10Z" fill="rgba(255,255,255,0.4)"/><path d="M0 14 L10 24.5 L20 14Z" fill="rgba(255,255,255,0.4)"/></svg>
<div class="t" style="top:1149.68px;font-size:24px;line-height:24px;color:#fff;font-weight:700;letter-spacing:0.887px;left:1736.6px;">Rate Plan</div>
<svg class="r" style="left:1856px;top:1146.5px;" width="20" height="24.5" viewBox="0 0 20 24.5"><path d="M0 10 L10 0 L20 10Z" fill="rgba(255,255,255,0.4)"/><path d="M0 14 L10 24.5 L20 14Z" fill="rgba(255,255,255,0.4)"/></svg>
<div class="t" style="top:1126.28px;font-size:24px;line-height:24px;color:#fff;font-weight:700;letter-spacing:0.500px;left:1947.9px;">Room</div>
<div class="t" style="top:1172.08px;font-size:24px;line-height:24px;color:#fff;font-weight:700;letter-spacing:0.080px;left:1936.7px;">Amount</div>
<svg class="r" style="left:2055.3px;top:1146.5px;" width="20" height="24.5" viewBox="0 0 20 24.5"><path d="M0 10 L10 0 L20 10Z" fill="rgba(255,255,255,0.4)"/><path d="M0 14 L10 24.5 L20 14Z" fill="rgba(255,255,255,0.4)"/></svg>
<div class="t" style="top:1126.28px;font-size:24px;line-height:24px;color:#fff;font-weight:700;letter-spacing:0.617px;left:2149.5px;">Persons</div>
<div class="t" style="top:1173.72px;font-size:21px;line-height:21px;color:rgba(255,255,255,0.88);font-weight:700;letter-spacing:1.717px;left:2113.4px;">(ADT/CHD/INF)</div>
<svg class="r" style="left:2288px;top:1146.5px;" width="20" height="24.5" viewBox="0 0 20 24.5"><path d="M0 10 L10 0 L20 10Z" fill="rgba(255,255,255,0.4)"/><path d="M0 14 L10 24.5 L20 14Z" fill="rgba(255,255,255,0.4)"/></svg>
<div class="t" style="top:1125.38px;font-size:24px;line-height:24px;color:#fff;font-weight:700;letter-spacing:1.000px;left:2365.6px;">Total</div>
<div class="t" style="top:1170.98px;font-size:24px;line-height:24px;color:#fff;font-weight:700;letter-spacing:0.517px;left:2345.8px;">Persons</div>
<svg class="r" style="left:2448px;top:1146.5px;" width="20" height="24.5" viewBox="0 0 20 24.5"><path d="M0 10 L10 0 L20 10Z" fill="rgba(255,255,255,0.4)"/><path d="M0 14 L10 24.5 L20 14Z" fill="rgba(255,255,255,0.4)"/></svg>
<div class="t" style="top:1147.98px;font-size:24px;line-height:24px;color:#fff;font-weight:700;letter-spacing:0.760px;left:2573.7px;">Status</div>
<svg class="r" style="left:2724.5px;top:1146.5px;" width="20" height="24.5" viewBox="0 0 20 24.5"><path d="M0 10 L10 0 L20 10Z" fill="rgba(255,255,255,0.4)"/><path d="M0 14 L10 24.5 L20 14Z" fill="rgba(255,255,255,0.4)"/></svg>
<div class="t" style="top:1147.98px;font-size:24px;line-height:24px;color:#fff;font-weight:700;letter-spacing:0.500px;left:2802px;">Channel</div>
<svg class="r" style="left:2924px;top:1146.5px;" width="20" height="24.5" viewBox="0 0 20 24.5"><path d="M0 10 L10 0 L20 10Z" fill="rgba(255,255,255,0.4)"/><path d="M0 14 L10 24.5 L20 14Z" fill="rgba(255,255,255,0.4)"/></svg>
<div class="r" style="left:484.6px;top:1255px;width:23px;height:23px;background:#fff;border:2px solid #dcdfe6;border-radius:3px;"></div>
<div class="t" style="top:1254.28px;font-size:24px;line-height:24px;color:#1f1f1f;letter-spacing:1.567px;left:523.7px;">1044</div>
<div class="t" style="top:1254.28px;font-size:24px;line-height:24px;color:#1f1f1f;left:704px;">-</div>
<div class="t" style="top:1254.28px;font-size:24px;line-height:24px;color:#1f1f1f;letter-spacing:1.500px;left:1023.4000000000001px;">06 Oct</div>
<div class="t" style="top:1300.28px;font-size:24px;line-height:24px;color:#1f1f1f;letter-spacing:2.000px;left:1023.4000000000001px;">2025</div>
<div class="t" style="top:1254.28px;font-size:24px;line-height:24px;color:#1f1f1f;letter-spacing:1.300px;left:1203.9px;">07 Oct</div>
<div class="t" style="top:1300.28px;font-size:24px;line-height:24px;color:#1f1f1f;letter-spacing:2.000px;left:1203.9px;">2025</div>
<div class="t" style="top:1254.28px;font-size:24px;line-height:24px;color:#1f1f1f;letter-spacing:1.471px;left:1383px;">Standard</div>
<div class="t" style="top:1300.28px;font-size:24px;line-height:24px;color:#1f1f1f;letter-spacing:2.333px;left:1384px;">Twin</div>
<div class="t" style="top:1346.28px;font-size:24px;line-height:24px;color:#1f1f1f;letter-spacing:2.167px;left:1382px;">Room</div>
<div class="t" style="top:1254.28px;font-size:24px;line-height:24px;color:#1f1f1f;left:1560px;">-</div>
<div class="t" style="top:1254.28px;font-size:24px;line-height:24px;color:#1f1f1f;letter-spacing:2.167px;left:1734px;">Room</div>
<div class="t" style="top:1300.28px;font-size:24px;line-height:24px;color:#1f1f1f;letter-spacing:3.167px;left:1736px;">with</div>
<div class="t" style="top:1346.28px;font-size:24px;line-height:24px;color:#1f1f1f;letter-spacing:1.812px;left:1735px;">breakfast</div>
<div class="t" style="top:1392.28px;font-size:24px;line-height:24px;color:#1f1f1f;letter-spacing:1.375px;left:1735px;">2 pax</div>
<div class="t" style="top:1254.28px;font-size:24px;line-height:24px;color:#1f1f1f;letter-spacing:1.286px;left:1950px;">2,000.00</div>
<div class="t" style="top:1254.28px;font-size:24px;line-height:24px;color:#1f1f1f;letter-spacing:3.400px;left:2164px;">2/0/0</div>
<div class="t" style="top:1254.28px;font-size:24px;line-height:24px;color:#1f1f1f;left:2388px;">2</div>
<div class="r" style="left:2523px;top:1243px;width:180px;height:43px;background:#f5ac3b;border-radius:22px;"></div>
<div class="t" style="top:1253.58px;font-size:24px;line-height:24px;color:#fff;font-weight:700;letter-spacing:0.743px;left:2555.8px;">Reserved</div>
<div class="t" style="top:1254.28px;font-size:24px;line-height:24px;color:#1f1f1f;letter-spacing:1.386px;left:2778.3px;">Facebook</div>
<div class="r" style="left:484.6px;top:1473px;width:23px;height:23px;background:#fff;border:2px solid #dcdfe6;border-radius:3px;"></div>
<div class="t" style="top:1472.28px;font-size:24px;line-height:24px;color:#1f1f1f;letter-spacing:1.567px;left:523.7px;">1043</div>
<div class="t" style="top:1472.28px;font-size:24px;line-height:24px;color:#1f1f1f;left:704px;">-</div>
<div class="t" style="top:1472.28px;font-size:24px;line-height:24px;color:#1f1f1f;letter-spacing:1.500px;left:1023.4000000000001px;">06 Oct</div>
<div class="t" style="top:1518.28px;font-size:24px;line-height:24px;color:#1f1f1f;letter-spacing:2.000px;left:1023.4000000000001px;">2025</div>
<div class="t" style="top:1472.28px;font-size:24px;line-height:24px;color:#1f1f1f;letter-spacing:1.300px;left:1203.9px;">07 Oct</div>
<div class="t" style="top:1518.28px;font-size:24px;line-height:24px;color:#1f1f1f;letter-spacing:2.000px;left:1203.9px;">2025</div>
<div class="t" style="top:1472.28px;font-size:24px;line-height:24px;color:#1f1f1f;letter-spacing:1.471px;left:1383px;">Standard</div>
<div class="t" style="top:1518.28px;font-size:24px;line-height:24px;color:#1f1f1f;letter-spacing:2.333px;left:1384px;">Twin</div>
<div class="t" style="top:1564.28px;font-size:24px;line-height:24px;color:#1f1f1f;letter-spacing:2.167px;left:1382px;">Room</div>
<div class="t" style="top:1472.28px;font-size:24px;line-height:24px;color:#1f1f1f;letter-spacing:3.167px;left:1558px;">1111111</div>
<div class="t" style="top:1518.28px;font-size:24px;line-height:24px;color:#1f1f1f;letter-spacing:2.500px;left:1558px;">111</div>
<div class="t" style="top:1472.28px;font-size:24px;line-height:24px;color:#1f1f1f;letter-spacing:2.167px;left:1734px;">Room</div>
<div class="t" style="top:1518.28px;font-size:24px;line-height:24px;color:#1f1f1f;letter-spacing:3.167px;left:1736px;">with</div>
<div class="t" style="top:1564.28px;font-size:24px;line-height:24px;color:#1f1f1f;letter-spacing:1.812px;left:1735px;">breakfast</div>
<div class="t" style="top:1610.28px;font-size:24px;line-height:24px;color:#1f1f1f;letter-spacing:1.375px;left:1735px;">2 pax</div>
<div class="t" style="top:1472.28px;font-size:24px;line-height:24px;color:#1f1f1f;letter-spacing:1.286px;left:1950px;">2,000.00</div>
<div class="t" style="top:1472.28px;font-size:24px;line-height:24px;color:#1f1f1f;letter-spacing:3.400px;left:2164px;">2/0/0</div>
<div class="t" style="top:1472.28px;font-size:24px;line-height:24px;color:#1f1f1f;left:2388px;">2</div>
<div class="r" style="left:2523px;top:1461px;width:180px;height:43px;background:#f5ac3b;border-radius:22px;"></div>
<div class="t" style="top:1471.58px;font-size:24px;line-height:24px;color:#fff;font-weight:700;letter-spacing:0.743px;left:2555.8px;">Reserved</div>
<div class="t" style="top:1472.28px;font-size:24px;line-height:24px;color:#1f1f1f;letter-spacing:1.386px;left:2778.3px;">Facebook</div>
<div class="r" style="left:500.5px;top:1723px;width:130.5px;height:47px;border:2px solid #dcdfe6;border-radius:6px;"></div>
<div class="t" style="top:1734.68px;font-size:24px;line-height:24px;color:#606266;letter-spacing:-0.400px;left:516px;">50</div>
<svg class="r" style="left:590px;top:1740px;" width="24" height="14.5" viewBox="0 0 24 14.5"><path d="M2 2 L12.0 12.5 L22 2" stroke="#a8abb2" stroke-width="1.6" fill="none"/></svg>
<div class="t" style="top:1729.61px;font-size:30px;line-height:30px;color:#2c3e50;letter-spacing:-1.080px;left:652.6px;">/ Page</div>
<div class="r" style="left:754px;top:1723px;width:47.6px;height:47.6px;background:#f4f4f5;border-radius:4px;"></div>
<svg class="r" style="left:754px;top:1723px;" width="47.6" height="47.6" viewBox="0 0 47.6 47.6"><path d="M27 17 L20.5 23.8 L27 30.6" stroke="#c0c4cc" stroke-width="2" fill="none"/></svg>
<div class="r" style="left:818px;top:1723px;width:48px;height:47.6px;background:#409eff;border-radius:4px;"></div>
<div class="t" style="top:1735.18px;font-size:24px;line-height:24px;color:#fff;-webkit-text-stroke-width:0.6px;left:818.0px;width:48px;text-align:center;">1</div>
<div class="r" style="left:881.7px;top:1723px;width:48px;height:47.6px;background:#f4f4f5;border-radius:4px;"></div>
<svg class="r" style="left:881.7px;top:1723px;" width="48" height="47.6" viewBox="0 0 48 47.6"><path d="M21 17 L27.5 23.8 L21 30.6" stroke="#909399" stroke-width="2" fill="none"/></svg>
<div class="t" style="top:1730.30px;font-size:28px;line-height:28px;color:#c0c4cc;letter-spacing:-0.019px;left:2592.3px;">Showing 1 to 2 of 2 entries</div>
<div class="r" style="left:2443.5px;top:1871px;width:238.5px;height:79.5px;border:2px solid #dcdfe6;border-radius:8px;background:#fff;"></div>
<svg class="r" style="left:2509px;top:1893px;" width="36" height="36" viewBox="0 0 36 36"><path d="M9 11 V3.5 H26 V11" stroke="#606266" stroke-width="2.2" fill="none"/><path d="M9 26 H4 A1.8 1.8 0 0 1 2.3 24.2 V12.8 A1.8 1.8 0 0 1 4 11 H31 A1.8 1.8 0 0 1 32.8 12.8 V24.2 A1.8 1.8 0 0 1 31 26 H26" stroke="#606266" stroke-width="2.2" fill="none"/><rect x="9" y="19.5" width="17" height="14" stroke="#606266" stroke-width="2.2" fill="none"/><path d="M7 15 H9.5 M11.5 15 H14" stroke="#606266" stroke-width="1.8"/></svg>
<div class="t" style="top:1896.60px;font-size:28px;line-height:28px;color:#606266;-webkit-text-stroke-width:0.6px;letter-spacing:0.350px;left:2556px;">Print</div>
<div class="r" style="left:2715px;top:1871px;width:268.7px;height:79.5px;background:#409eff;border-radius:8px;"></div>
<svg class="r" style="left:2744px;top:1895px;" width="32" height="32" viewBox="0 0 32 32"><path d="M15.7 2.5 V21 M7 13.5 L15.7 22 L24.4 13.5" stroke="#fff" stroke-width="2.4" fill="none"/><path d="M2 29 H29.5" stroke="#fff" stroke-width="2.4"/></svg>
<div class="t" style="top:1896.30px;font-size:28px;line-height:28px;color:#fff;-webkit-text-stroke-width:0.6px;letter-spacing:-0.100px;left:2787.7px;">Export</div>
<div class="r" style="left:2913.5px;top:1892.8px;width:1.8px;height:36.2px;background:#fff;"></div>
<div class="r" style="left:2944.3px;top:1894.9px;width:8.2px;height:8.2px;background:#fff;border-radius:50%;"></div>
<div class="r" style="left:2944.3px;top:1907.2px;width:8.2px;height:8.2px;background:#fff;border-radius:50%;"></div>
<div class="r" style="left:2944.3px;top:1919.6000000000001px;width:8.2px;height:8.2px;background:#fff;border-radius:50%;"></div>
</body></html>
